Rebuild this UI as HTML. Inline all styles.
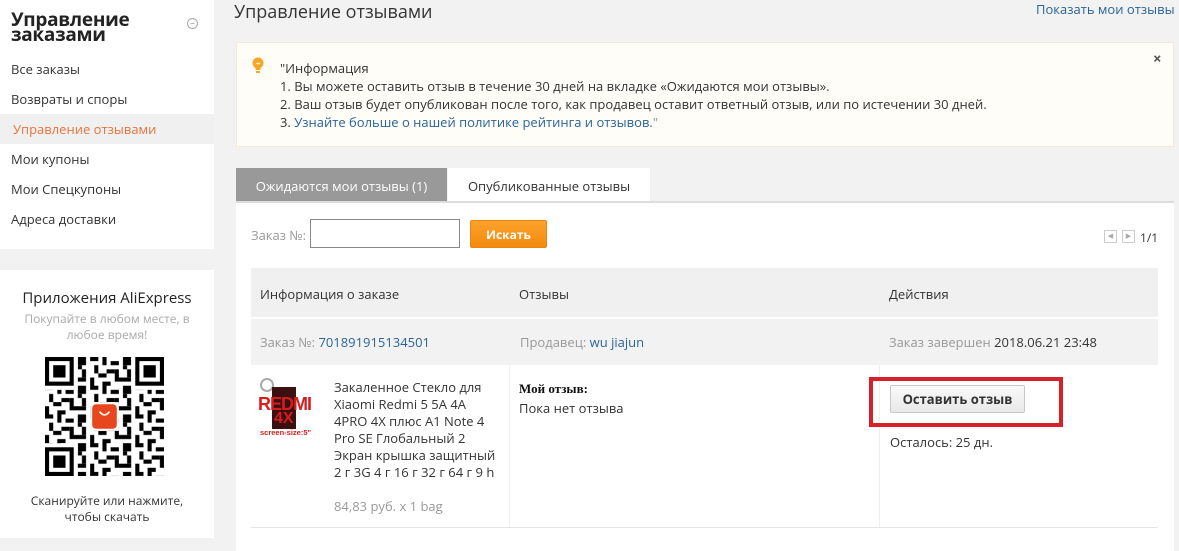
<!DOCTYPE html>
<html><head><meta charset="utf-8"><style>
*{margin:0;padding:0;box-sizing:border-box}
body{width:1179px;height:551px;background:#f2f2f2;font-family:"Open Sans","Liberation Sans","DejaVu Sans",sans-serif;color:#333;position:relative;overflow:hidden;font-size:13px}
.abs{position:absolute}
a{color:#2a6496;text-decoration:none}
.side1{left:0;top:0;width:214px;height:249px;background:#fff}
.side1 h2{position:absolute;left:11px;top:12px;font-size:19px;line-height:15px;font-weight:bold;color:#222;letter-spacing:-0.3px}
.side1 .it{position:absolute;left:11px;font-size:13px;color:#333}
.side2{left:0;top:270px;width:214px;height:268px;background:#fff;text-align:center}
.gray{color:#999}
</style></head><body>
<div class="abs side1">
<h2>Управление<br>заказами</h2>
<div class="abs" style="left:187px;top:18px;width:11px;height:11px;border:1px solid #aaa;border-radius:50%;font-size:9px;line-height:8px;text-align:center;color:#888">–</div>
<div class="it" style="top:60px">Все заказы</div>
<div class="it" style="top:90px">Возвраты и споры</div>
<div class="abs" style="left:0;top:114px;width:214px;height:30px;background:#f0f0f0"></div>
<div class="it" style="top:120px;left:13px;color:#e8743b">Управление отзывами</div>
<div class="it" style="top:150px">Мои купоны</div>
<div class="it" style="top:180px">Мои Спецкупоны</div>
<div class="it" style="top:210px">Адреса доставки</div>
</div>
<div class="abs side2">
<div style="margin-top:18px;font-size:15px;color:#222">Приложения AliExpress</div>
<div style="margin-top:3px;font-size:12px;line-height:16px;color:#aaa">Покупайте в любом месте, в<br>любое время!</div>
<svg class="abs" style="left:45px;top:87px" width="119" height="119" viewBox="0 0 29 29">
<defs><pattern id="p" width="11" height="7" patternUnits="userSpaceOnUse"><rect x="0" y="0" width="2" height="1"/><rect x="3" y="0" width="1" height="2"/><rect x="5" y="1" width="2" height="1"/><rect x="1" y="2" width="1" height="2"/><rect x="4" y="3" width="2" height="1"/><rect x="0" y="5" width="1" height="2"/><rect x="6" y="3" width="1" height="3"/><rect x="2" y="4" width="2" height="1"/><rect x="8" y="0" width="2" height="2"/><rect x="9" y="3" width="1" height="2"/><rect x="7" y="5" width="3" height="1"/><rect x="3" y="6" width="2" height="1"/><rect x="8" y="2" width="1" height="1"/></pattern></defs>
<rect width="29" height="29" fill="#fff"/>
<rect width="29" height="29" fill="url(#p)"/>
<g><rect x="0" y="0" width="8" height="8" fill="#fff"/><rect x="0" y="0" width="7" height="7"/><rect x="1" y="1" width="5" height="5" fill="#fff"/><rect x="2" y="2" width="3" height="3"/>
<rect x="21" y="0" width="8" height="8" fill="#fff"/><rect x="22" y="0" width="7" height="7"/><rect x="23" y="1" width="5" height="5" fill="#fff"/><rect x="24" y="2" width="3" height="3"/>
<rect x="0" y="21" width="8" height="8" fill="#fff"/><rect x="0" y="22" width="7" height="7"/><rect x="1" y="23" width="5" height="5" fill="#fff"/><rect x="2" y="24" width="3" height="3"/></g>
<rect x="11" y="11" width="7" height="7" fill="#fff"/><rect x="11.5" y="11.5" width="6" height="6" rx="1" fill="#e8461e"/>
<path d="M13.3 13.3 q1.2 1.6 2.4 0" stroke="#fff" stroke-width="0.4" fill="none"/>
</svg>
<div class="abs" style="left:0;width:214px;top:223px;font-size:12px;line-height:16px;color:#333">Сканируйте или нажмите,<br>чтобы скачать</div>
</div>

<div class="abs" style="left:234px;top:0;font-size:18px;color:#333">Управление отзывами</div>
<div class="abs" style="left:1036px;top:0;font-size:13px"><a>Показать мои отзывы</a></div>

<div class="abs" style="left:236px;top:42px;width:938px;height:105px;background:#fffdf8;border:1px solid #f6ead6"></div>
<svg class="abs" style="left:251px;top:57px" width="14" height="17" viewBox="0 0 14 17"><circle cx="7" cy="6" r="5.5" fill="#f5a623"/><rect x="4.5" y="10" width="5" height="3" fill="#f5a623"/><rect x="5" y="14" width="4" height="2" fill="#f5a623"/><path d="M5 6l1 1 1-1 1 1 1-1" stroke="#fff" stroke-width="0.8" fill="none"/></svg>
<div class="abs" style="left:280px;top:59px;font-size:13px;line-height:18px;color:#333">"Информация<br>1. Вы можете оставить отзыв в течение 30 дней на вкладке «Ожидаются мои отзывы».<br>2. Ваш отзыв будет опубликован после того, как продавец оставит ответный отзыв, или по истечении 30 дней.<br>3. <a>Узнайте больше о нашей политике рейтинга и отзывов.</a><span style="color:#999">"</span></div>
<div class="abs" style="left:1153px;top:49px;font-size:15px;color:#555;font-weight:bold">×</div>

<div class="abs" style="left:236px;top:168px;width:211px;height:34px;background:#999;color:#fff;text-align:center;line-height:36px;font-size:13px">Ожидаются мои отзывы (1)</div>
<div class="abs" style="left:448px;top:168px;width:202px;height:34px;background:#fff;text-align:center;line-height:36px;font-size:13px;color:#333">Опубликованные отзывы</div>
<div class="abs" style="left:236px;top:201px;width:938px;height:350px;background:#fff;border-top:2px solid #ddd"></div>

<div class="abs gray" style="left:251px;top:226px;font-size:13px">Заказ №:</div>
<div class="abs" style="left:310px;top:219px;width:150px;height:29px;border:1px solid #888;background:#fff"></div>
<div class="abs" style="left:470px;top:220px;width:77px;height:28px;background:linear-gradient(#fba22c,#f58a0f);border-radius:2px;color:#fff;font-weight:bold;font-size:12px;text-align:center;line-height:28px;border:1px solid #e8860f">Искать</div>
<div class="abs" style="left:1104px;top:230px;width:13px;height:13px;border:1px solid #ccc;font-size:7px;color:#aaa;text-align:center;line-height:12px">◀</div>
<div class="abs" style="left:1122px;top:230px;width:13px;height:13px;border:1px solid #ccc;font-size:7px;color:#aaa;text-align:center;line-height:12px">▶</div>
<div class="abs" style="left:1140px;top:229px;font-size:12px">1/1</div>

<div class="abs" style="left:251px;top:268px;width:907px;height:49px;background:#f0f0f0"></div>
<div class="abs" style="left:260px;top:285px">Информация о заказе</div>
<div class="abs" style="left:519px;top:285px">Отзывы</div>
<div class="abs" style="left:889px;top:285px">Действия</div>
<div class="abs" style="left:251px;top:319px;width:907px;height:46px;background:#f2f2f2"></div>
<div class="abs" style="left:260px;top:333px"><span class="gray">Заказ №: </span><a>701891915134501</a></div>
<div class="abs" style="left:520px;top:333px"><span class="gray">Продавец: </span><a>wu jiajun</a></div>
<div class="abs" style="left:889px;top:333px"><span class="gray">Заказ завершен </span>2018.06.21 23:48</div>

<div class="abs" style="left:509px;top:365px;width:1px;height:162px;background:#eee"></div>
<div class="abs" style="left:879px;top:365px;width:1px;height:162px;background:#eee"></div>
<div class="abs" style="left:251px;top:527px;width:907px;height:1px;background:#e5e5e5"></div>

<div class="abs" style="left:258px;top:377px;width:64px;height:60px">
<div class="abs" style="left:2px;top:1px;width:14px;height:14px;border:2px solid #aaa;border-radius:50%"></div>
<div class="abs" style="left:14px;top:10px;width:24px;height:42px;background:#3a1010"></div>
<div class="abs" style="left:0;top:17px;font:bold 18px 'Liberation Sans',sans-serif;color:#d81c1c;letter-spacing:-1px">REDMI</div>
<div class="abs" style="left:16px;top:33px;font:bold 16px 'Liberation Sans',sans-serif;color:#d81c1c">4X</div>
<div class="abs" style="left:2px;top:51px;font:bold 7.5px 'Liberation Sans',sans-serif;color:#d81c1c">screen-size:5"</div>
</div>
<div class="abs" style="left:334px;top:379px;white-space:nowrap;font-size:13px;line-height:17px;color:#333">Закаленное Стекло для<br>Xiaomi Redmi 5 5A 4A<br>4PRO 4X плюс A1 Note 4<br>Pro SE Глобальный 2<br>Экран крышка защитный<br>2 г 3G 4 г 16 г 32 г 64 г 9 h</div>
<div class="abs gray" style="left:334px;top:497px">84,83 руб. x 1 bag</div>

<div class="abs" style="left:519px;top:381px;font:bold 13px 'Liberation Serif',serif;color:#111">Мой отзыв:</div>
<div class="abs" style="left:519px;top:399px">Пока нет отзыва</div>

<div class="abs" style="left:869px;top:377px;width:194px;height:50px;border:4px solid #d7202a"></div>
<div class="abs" style="left:890px;top:385px;width:135px;height:28px;border:1px solid #c8c8c8;border-radius:2px;background:linear-gradient(#fafafa,#e8e8e8);text-align:center;line-height:27px;font-weight:bold;font-size:13px;color:#333">Оставить отзыв</div>
<div class="abs" style="left:890px;top:433px">Осталось: 25 дн.</div>
</body></html>
